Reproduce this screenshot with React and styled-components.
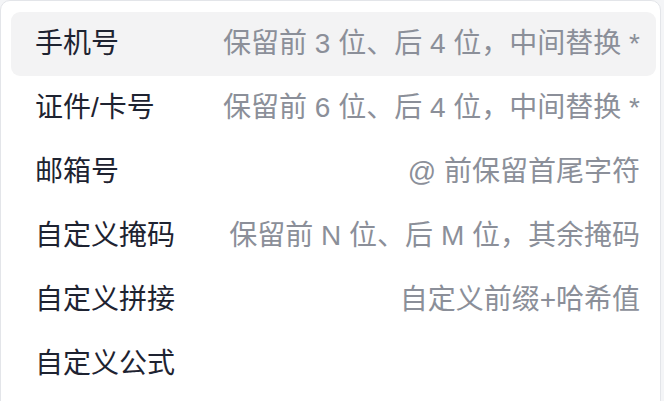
import React from "react";
import styled, { createGlobalStyle } from "styled-components";

const GlobalStyle = createGlobalStyle`
  html, body {
    margin: 0;
    padding: 0;
    background: #f4f5f7;
    overflow: hidden;
  }
  #root {
    width: 664px;
    height: 401px;
  }
`;

const Stage = styled.div`
  width: 664px;
  height: 401px;
  display: flex;
  align-items: flex-start;
  overflow: hidden;
`;

const Menu = styled.div`
  box-sizing: border-box;
  width: 661px;
  min-height: 420px;
  background: #ffffff;
  border: 1px solid #e3e5e9;
  border-radius: 10px;
  padding: 11px 4px 12px 10px;
  display: flex;
  flex-direction: column;
  font-family: "Liberation Sans", "Noto Sans CJK SC", sans-serif;
`;

const Item = styled.div`
  height: 64px;
  box-sizing: border-box;
  display: flex;
  align-items: center;
  justify-content: space-between;
  padding: 0 16px 0 24px;
  border-radius: 9px;
  background: ${(p) => (p.$active ? "#f3f3f4" : "transparent")};
  gap: 24px;
`;

const Label = styled.span`
  font-size: 28px;
  color: #1e2331;
  white-space: nowrap;
  line-height: 1;
`;

const Desc = styled.span`
  font-size: 28px;
  color: #8b8f99;
  white-space: nowrap;
  line-height: 1;
`;

const items = [
  { label: "手机号", desc: "保留前 3 位、后 4 位，中间替换 *", active: true },
  { label: "证件/卡号", desc: "保留前 6 位、后 4 位，中间替换 *" },
  { label: "邮箱号", desc: "@ 前保留首尾字符" },
  { label: "自定义掩码", desc: "保留前 N 位、后 M 位，其余掩码" },
  { label: "自定义拼接", desc: "自定义前缀+哈希值" },
  { label: "自定义公式", desc: "" },
];

export default function App() {
  return (
    <>
      <GlobalStyle />
      <Stage>
        <Menu>
          {items.map((it) => (
            <Item key={it.label} $active={it.active}>
              <Label>{it.label}</Label>
              {it.desc && <Desc>{it.desc}</Desc>}
            </Item>
          ))}
        </Menu>
      </Stage>
    </>
  );
}
